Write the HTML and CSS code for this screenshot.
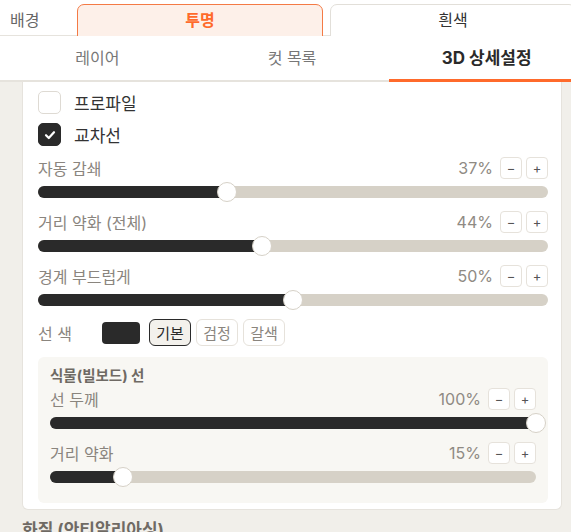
FILE: index.html
```html
<!DOCTYPE html>
<html lang="ko">
<head>
<meta charset="utf-8">
<link rel="stylesheet" href="styles.css">
</head>
<body>
<div class="app">
  <div class="bgrow">
    <div class="bglabel">배경</div>
    <div class="seg seg-active">투명</div>
    <div class="seg">흰색</div>
  </div>
  <div class="tabs">
    <div class="tab">레이어</div>
    <div class="tab">컷 목록</div>
    <div class="tab tab-active">3D 상세설정</div>
  </div>
  <div class="content">
    <div class="card">
      <div class="check-row">
        <span class="box"></span><span class="check-label">프로파일</span>
      </div>
      <div class="check-row">
        <span class="box box-on"><svg width="14" height="14" viewBox="0 0 14 14"><path d="M3 7.2 L5.8 10 L11 4.2" fill="none" stroke="#fff" stroke-width="2.2" stroke-linecap="round" stroke-linejoin="round"/></svg></span><span class="check-label">교차선</span>
      </div>

      <div class="group first">
        <div class="head"><span class="lbl">자동 감쇄</span><span class="val">37%</span><span class="btn">−</span><span class="btn">+</span></div>
        <div class="slider"><div class="fill" style="width:37%"></div><div class="thumb" style="left:37%"></div></div>
      </div>
      <div class="group">
        <div class="head"><span class="lbl">거리 약화 (전체)</span><span class="val">44%</span><span class="btn">−</span><span class="btn">+</span></div>
        <div class="slider"><div class="fill" style="width:44%"></div><div class="thumb" style="left:44%"></div></div>
      </div>
      <div class="group">
        <div class="head"><span class="lbl">경계 부드럽게</span><span class="val">50%</span><span class="btn">−</span><span class="btn">+</span></div>
        <div class="slider"><div class="fill" style="width:50%"></div><div class="thumb" style="left:50%"></div></div>
      </div>

      <div class="color-row">
        <span class="color-lbl">선 색</span>
        <span class="swatch"></span>
        <span class="pill pill-on">기본</span>
        <span class="pill">검정</span>
        <span class="pill">갈색</span>
      </div>

      <div class="sub">
        <div class="sub-title">식물(빌보드) 선</div>
        <div class="group sfirst">
          <div class="head"><span class="lbl">선 두께</span><span class="val">100%</span><span class="btn">−</span><span class="btn">+</span></div>
          <div class="slider"><div class="fill" style="width:100%"></div><div class="thumb" style="left:100%"></div></div>
        </div>
        <div class="group">
          <div class="head"><span class="lbl">거리 약화</span><span class="val">15%</span><span class="btn">−</span><span class="btn">+</span></div>
          <div class="slider"><div class="fill" style="width:15%"></div><div class="thumb" style="left:15%"></div></div>
        </div>
      </div>
    </div>
    <div class="section-title">화질 (안티알리아싱)</div>
  </div>
</div>
</body>
</html>
```

FILE: styles.css
```css
html, body {
  margin: 0;
  padding: 0;
  overflow: hidden;
  background: #f1efea;
}
body {
  font-family: Inter, "Noto Sans CJK KR", sans-serif;
  color: #2a2a2a;
}
.app {
  width: 584px;
}
.bgrow {
  height: 36px;
  box-sizing: border-box;
  padding-top: 4px;
  overflow: hidden;
  display: flex;
  align-items: flex-start;
  background: #fff linear-gradient(to top, #e6e3dd 1px, transparent 1px);
}
.bglabel {
  width: 77px;
  padding-left: 10px;
  box-sizing: border-box;
  font-size: 16px;
  line-height: 32px;
  color: #666;
}
.seg {
  width: 246px;
  height: 40px;
  box-sizing: border-box;
  border: 1px solid #e2dfd9;
  border-radius: 7px 7px 0 0;
  background: #fff;
  text-align: center;
  font-size: 16px;
  line-height: 30px;
  color: #333;
  margin-left: 7px;
}
.seg-active {
  margin-left: 0;
  border-color: #f47a45;
  background: #fdf0e9;
  color: #ff6a2b;
  font-weight: 700;
}
.tabs {
  display: flex;
  height: 46px;
  box-sizing: border-box;
  background: #fff;
  border-bottom: 2px solid #e6e3dd;
}
.tab {
  flex: 1;
  position: relative;
  text-align: center;
  font-size: 16px;
  line-height: 44px;
  color: #777;
}
.tab-active {
  color: #2a2a2a;
  font-weight: 700;
  font-size: 17px;
}
.tab-active::after {
  content: "";
  position: absolute;
  left: 0;
  right: 0;
  bottom: -2px;
  height: 3px;
  background: #ff6a2b;
}
.content {
  padding: 0 22px;
}
.card {
  background: #fff;
  border: 1px solid #e6e3dd;
  border-top: none;
  border-radius: 0 0 6px 6px;
  padding: 9px 13px 6px 15px;
}
.check-row {
  display: flex;
  align-items: center;
  height: 23px;
}
.check-row + .check-row {
  margin-top: 9px;
}
.box {
  width: 23px;
  height: 23px;
  box-sizing: border-box;
  border: 1px solid #dedad3;
  border-radius: 5px;
  display: flex;
  align-items: center;
  justify-content: center;
}
.box-on {
  background: #2a2a2a;
  border-color: #2a2a2a;
}
.check-label {
  margin-left: 13px;
  font-size: 17px;
  color: #333;
}
.group {
  margin-top: 13px;
}
.group.first {
  margin-top: 11px;
}
.group.sfirst {
  margin-top: 3px;
}
.head {
  display: flex;
  align-items: center;
  height: 22px;
}
.lbl {
  flex: 1;
  font-size: 16px;
  color: #8a857e;
}
.val {
  font-size: 16px;
  color: #8f8a83;
  margin-right: 7px;
}
.btn {
  width: 22px;
  height: 22px;
  box-sizing: border-box;
  border: 1px solid #e6e2db;
  border-radius: 4px;
  background: #fff;
  display: flex;
  align-items: center;
  justify-content: center;
  font-size: 13px;
  color: #555;
}
.btn + .btn {
  margin-left: 4px;
}
.slider {
  position: relative;
  height: 12px;
  margin-top: 7px;
  border-radius: 6px;
  background: #d6d1c7;
}
.fill {
  height: 12px;
  border-radius: 6px;
  background: #2a2a2a;
}
.thumb {
  position: absolute;
  top: -4px;
  width: 20px;
  height: 20px;
  margin-left: -10px;
  box-sizing: border-box;
  border-radius: 50%;
  background: #fff;
  border: 1px solid #d6d1c7;
}
.color-row {
  display: flex;
  align-items: center;
  height: 27px;
  margin-top: 13px;
}
.color-lbl {
  width: 64px;
  font-size: 16px;
  color: #8a857e;
}
.swatch {
  width: 38px;
  height: 22px;
  border-radius: 4px;
  background: #2a2a2a;
  margin-right: 9px;
}
.pill {
  width: 42px;
  height: 27px;
  box-sizing: border-box;
  border: 1px solid #e6e2db;
  border-radius: 6px;
  display: flex;
  align-items: center;
  justify-content: center;
  font-size: 15px;
  color: #8a857e;
  margin-right: 5px;
}
.pill-on {
  border-color: #2a2a2a;
  background: #f3f1ec;
  color: #2a2a2a;
}
.sub {
  margin-top: 11px;
  background: #f8f7f3;
  border-radius: 6px;
  padding: 10px 12px 20px 12px;
}
.sub-title {
  font-size: 14.5px;
  font-weight: 700;
  line-height: 18px;
  color: #6f6a64;
}
.section-title {
  margin-top: 6px;
  font-size: 17px;
  font-weight: 700;
  color: #6f6a64;
}
```
